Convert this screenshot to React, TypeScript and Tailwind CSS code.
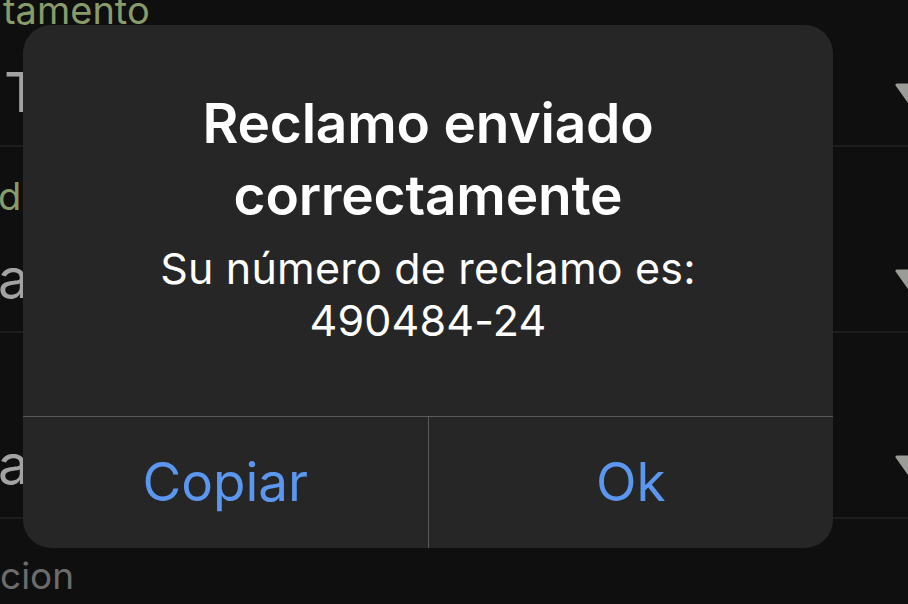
import React from "react";

const font = { fontFamily: "Inter, 'Noto Sans', sans-serif" };

function Chevron() {
  return (
    <svg width="28" height="21" viewBox="0 0 28 21" className="shrink-0 mt-[122px] mr-[-15px]">
      <path d="M2 2 L26 2 L14 19 Z" fill="#9b9b98" stroke="#9b9b98" strokeWidth="3" strokeLinejoin="round" />
    </svg>
  );
}

function Row({ label, value, first }: { label: string; value: string; first?: boolean }) {
  return (
    <div
      className={`h-[186px] shrink-0 flex justify-between border-b-2 border-[#1d1d1d] ${first ? "-mt-[39px]" : ""}`}
    >
      <div className="pt-[25px]">
        <div
          className={`h-[48px] leading-[48px] text-[38px] text-[#879c6a] whitespace-nowrap ${first ? "pl-[3px]" : "-ml-[2px]"}`}
        >
          {label}
        </div>
        <div className={`mt-[28px] leading-[60px] text-[55px] text-[#a3a3a3] whitespace-nowrap ${first ? "pl-[4px]" : "-ml-[2px]"}`}>
          {value}
        </div>
      </div>
      <Chevron />
    </div>
  );
}

export default function App() {
  return (
    <div className="relative w-[908px] h-[604px] overflow-hidden bg-[#0f0f0f]" style={font}>
      {/* formulario de fondo */}
      <div className="flex flex-col">
        <Row first label="tamento" value="T" />
        <Row label="d" value="a" />
        <Row label="" value="a" />
        <div className="pt-[33px] text-[37px] leading-[48px] text-[#6c6c6c] whitespace-nowrap">cion</div>
      </div>

      {/* alerta */}
      <div className="absolute left-[23px] top-[25px] w-[810px] h-[523px] rounded-[28px] bg-[#262626] flex flex-col overflow-hidden">
        <div className="flex-1 flex flex-col items-center pt-[62px] text-center">
          <h2 className="text-[55px] leading-[72px] font-semibold text-white tracking-[-0.2px]">
            Reclamo enviado
            <br />
            correctamente
          </h2>
          <p className="mt-[11px] text-[43px] leading-[52px] text-white tracking-[0.2px]">
            Su número de reclamo es:
            <br />
            490484-24
          </p>
        </div>
        <div className="h-[132px] flex border-t border-[#5a5a5c]">
          <button className="flex-1 flex items-center justify-center text-[53px] text-[#5b97ee] border-r border-[#5a5a5c]">
            Copiar
          </button>
          <button className="flex-1 flex items-center justify-center text-[53px] text-[#5b97ee]">Ok</button>
        </div>
      </div>
    </div>
  );
}
